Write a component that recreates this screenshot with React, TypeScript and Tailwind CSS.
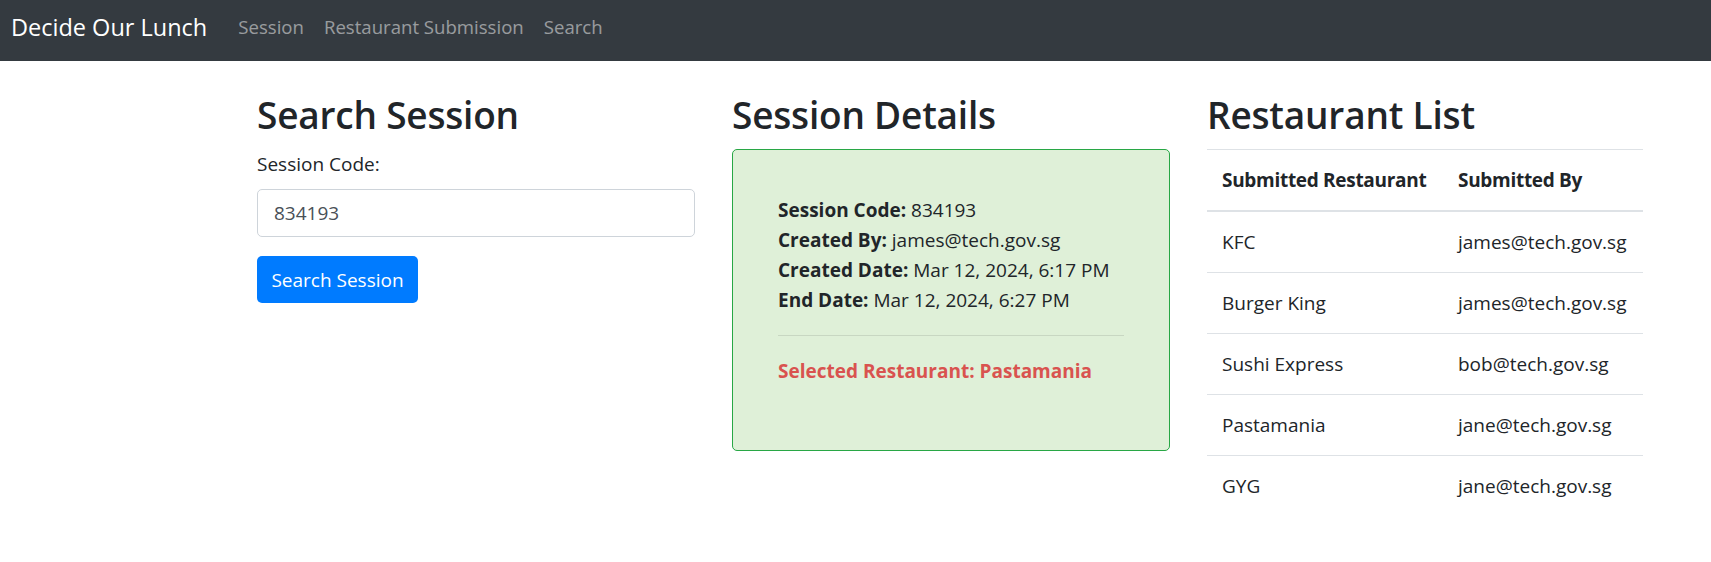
import React from "react";

const rows = [
  ["KFC", "james@tech.gov.sg"],
  ["Burger King", "james@tech.gov.sg"],
  ["Sushi Express", "bob@tech.gov.sg"],
  ["Pastamania", "jane@tech.gov.sg"],
  ["GYG", "jane@tech.gov.sg"],
];

export default function App() {
  return (
    <div className="min-h-[562px] bg-white text-[#212529] font-['Open_Sans',sans-serif]">
      <nav className="h-[61px] bg-[#343a40] flex items-center pl-[11px]">
        <span className="text-[23.5px] leading-[36px] text-white mr-[21px] -mt-[7px]">Decide Our Lunch</span>
        <span className="px-[10px] text-[18.6px] leading-[30px] text-white/50 -mt-[7px]">Session</span>
        <span className="px-[10px] text-[18.6px] leading-[30px] text-white/50 -mt-[7px]">Restaurant Submission</span>
        <span className="px-[10px] text-[18.6px] leading-[30px] text-white/50 -mt-[7px]">Search</span>
      </nav>
      <main className="flex pl-[257px] pt-[30px] gap-[37px]">
        <section className="w-[438px]">
          <h2 className="text-[37px] font-semibold leading-[48px] mb-[10px] tracking-[-0.2px]">Search Session</h2>
          <label className="block text-[19px] leading-[30px] mb-[10px] mt-[1px]">Session Code:</label>
          <div className="h-[48px] w-full border border-[#ced4da] rounded-[5px] px-[16px] flex items-center text-[19px] text-[#495057]">
            834193
          </div>
          <button className="mt-[19px] h-[47px] w-[161px] bg-[#007bff] rounded-[5px] text-white text-[19px] leading-[30px]">
            Search Session
          </button>
        </section>
        <section className="w-[438px]">
          <h2 className="text-[37px] font-semibold leading-[48px] mb-[10px] tracking-[-0.2px]">Session Details</h2>
          <div className="border border-[#28a745] bg-[#dff0d8] rounded-[5px] px-[45px] pt-[45px] pb-[44px] text-[19px] leading-[30px]">
            <div><b>Session Code:</b> 834193</div>
            <div><b>Created By:</b> james@tech.gov.sg</div>
            <div><b>Created Date:</b> Mar 12, 2024, 6:17 PM</div>
            <div><b>End Date:</b> Mar 12, 2024, 6:27 PM</div>
            <hr className="my-[20px] border-t border-black/10" />
            <p className="mb-[20px] font-bold text-[#d9534f]">Selected Restaurant: Pastamania</p>
          </div>
        </section>
        <section className="w-[436px]">
          <h2 className="text-[37px] font-semibold leading-[48px] mb-[10px] tracking-[-0.2px]">Restaurant List</h2>
          <table className="w-[436px] table-fixed border-collapse text-[19px] leading-[30px]">
            <thead>
              <tr className="border-t border-[#dee2e6]">
                <th className="w-[236px] whitespace-nowrap text-left font-bold p-[15px] tracking-[-0.3px] border-b-[2.5px] border-[#dee2e6]">Submitted Restaurant</th>
                <th className="w-[200px] whitespace-nowrap text-left font-bold p-[15px] tracking-[-0.3px] border-b-[2.5px] border-[#dee2e6]">Submitted By</th>
              </tr>
            </thead>
            <tbody>
              {rows.map(([r, by], i) => (
                <tr key={r} className={i === 0 ? "" : "border-t border-[#dee2e6]"}>
                  <td className="p-[15px] whitespace-nowrap">{r}</td>
                  <td className="p-[15px] whitespace-nowrap">{by}</td>
                </tr>
              ))}
            </tbody>
          </table>
        </section>
      </main>
    </div>
  );
}
